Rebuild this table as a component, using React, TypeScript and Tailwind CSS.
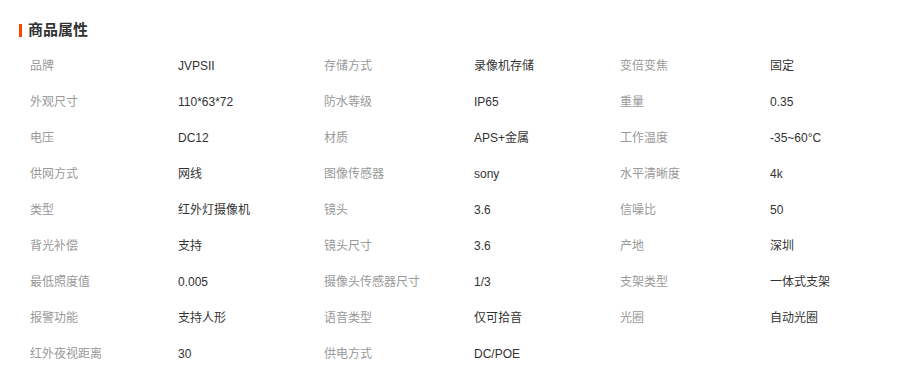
const rows: [string, string, string, string, string, string][] = [
  ['品牌', 'JVPSII', '存储方式', '录像机存储', '变倍变焦', '固定'],
  ['外观尺寸', '110*63*72', '防水等级', 'IP65', '重量', '0.35'],
  ['电压', 'DC12', '材质', 'APS+金属', '工作温度', '-35~60°C'],
  ['供网方式', '网线', '图像传感器', 'sony', '水平清晰度', '4k'],
  ['类型', '红外灯摄像机', '镜头', '3.6', '信噪比', '50'],
  ['背光补偿', '支持', '镜头尺寸', '3.6', '产地', '深圳'],
  ['最低照度值', '0.005', '摄像头传感器尺寸', '1/3', '支架类型', '一体式支架'],
  ['报警功能', '支持人形', '语音类型', '仅可拾音', '光圈', '自动光圈'],
  ['红外夜视距离', '30', '供电方式', 'DC/POE', '', ''],
];

export default function App() {
  return (
    <div className="h-[376px] w-[905px] bg-white font-['Liberation_Sans','Noto_Sans_CJK_SC',sans-serif] text-[12px]">
      <div className="flex items-center gap-[6px] pl-[19px] pt-[21px]">
        <span className="h-[13px] w-[3px] bg-[#ff4400]" />
        <h3 className="text-[15px] font-bold leading-[18px] text-[#333]">商品属性</h3>
      </div>
      <div className="mt-[9px] pl-[30px]">
        {rows.map((r, i) => (
          <div
            key={i}
            className="grid h-[36px] grid-cols-[148px_146px_150px_146px_150px_1fr] items-center"
          >
            <span className="text-[#999]">{r[0]}</span>
            <span className="text-[#333]">{r[1]}</span>
            <span className="text-[#999]">{r[2]}</span>
            <span className="text-[#333]">{r[3]}</span>
            <span className="text-[#999]">{r[4]}</span>
            <span className="text-[#333]">{r[5]}</span>
          </div>
        ))}
      </div>
    </div>
  );
}
